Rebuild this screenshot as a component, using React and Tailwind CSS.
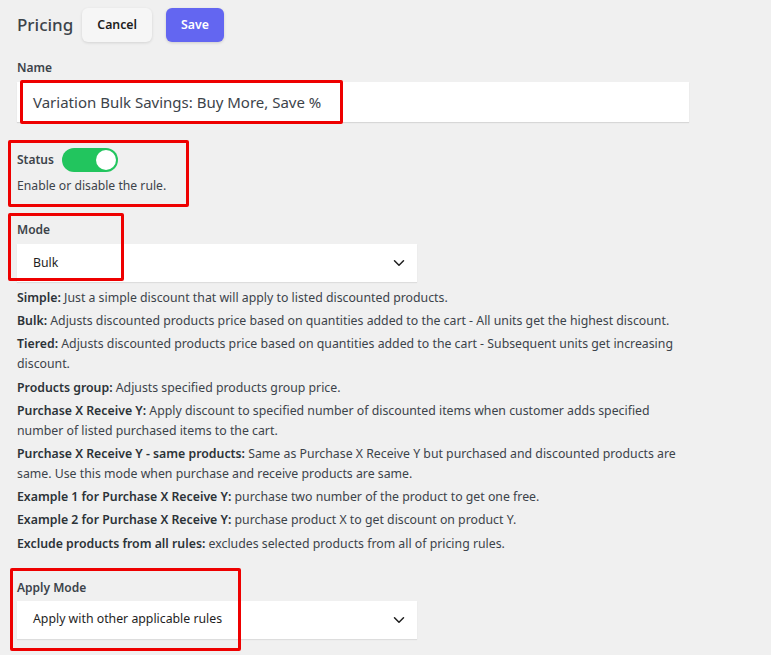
import React from 'react';
import { ChevronDown } from 'lucide-react';

const modes = [
    ['Simple:', 'Just a simple discount that will apply to listed discounted products.'],
    ['Bulk:', 'Adjusts discounted products price based on quantities added to the cart - All units get the highest discount.'],
    ['Tiered:', 'Adjusts discounted products price based on quantities added to the cart - Subsequent units get increasing discount.'],
    ['Products group:', 'Adjusts specified products group price.'],
    ['Purchase X Receive Y:', 'Apply discount to specified number of discounted items when customer adds specified number of listed purchased items to the cart.'],
    ['Purchase X Receive Y - same products:', 'Same as Purchase X Receive Y but purchased and discounted products are same. Use this mode when purchase and receive products are same.'],
    ['Example 1 for Purchase X Receive Y:', 'purchase two number of the product to get one free.'],
    ['Example 2 for Purchase X Receive Y:', 'purchase product X to get discount on product Y.'],
    ['Exclude products from all rules:', 'excludes selected products from all of pricing rules.'],
];

function Mark({ className }) {
    return <div className={"absolute border-[3px] border-[#ee0000] rounded-[2px] pointer-events-none " + className} />;
}

function Select({ value }) {
    return (
        <div className="w-[400px] h-[38px] bg-white shadow-[0_1px_1px_rgba(0,0,0,0.08)] flex items-center justify-between pl-4 pr-[9px] text-[12.3px] text-[#1e1e1e]">
            <span>{value}</span>
            <ChevronDown size={18} strokeWidth={2} className="text-[#1e1e1e]" />
        </div>
    );
}

export default function App() {
    return (
        <div className="relative min-h-[655px] bg-[#f0f0f0] px-[17px] pt-2 font-['Noto_Sans',sans-serif] text-[#3c434a]">
            <div className="flex items-center h-[34px]">
                <h1 className="text-[17px] font-medium text-[#3c434a] mr-[9px]">Pricing</h1>
                <button className="h-[34px] px-[15px] rounded-md bg-[#f6f6f6] shadow-[0_1px_3px_rgba(0,0,0,0.12)] text-[12.3px] font-semibold text-[#1e1e1e]">Cancel</button>
                <button className="h-[34px] px-[15px] ml-[14px] rounded-md bg-[#6366f1] shadow-[0_1px_3px_rgba(0,0,0,0.15)] text-[12.3px] font-semibold text-white">Save</button>
            </div>

            <div className="mt-[17px] text-[12px] font-semibold text-[#3c434a] leading-[18px]">Name</div>
            <div className="mt-[5px] w-[672px] h-[40px] bg-white shadow-[0_1px_1px_rgba(0,0,0,0.1)] flex items-center pl-4 text-[15px] text-[#3c434a]">
                Variation Bulk Savings: Buy More, Save %
            </div>

            <div className="mt-[26px] flex items-center gap-[8px]">
                <span className="text-[12px] font-semibold">Status</span>
                <div className="w-[56px] h-[24px] rounded-full bg-[#22c55e] flex items-center justify-end pr-[2px]">
                    <div className="w-[20px] h-[20px] rounded-full bg-white" />
                </div>
            </div>
            <p className="mt-[4px] text-[12.2px] leading-[20px]">Enable or disable the rule.</p>

            <div className="mt-[25px] text-[12px] font-semibold leading-[18px]">Mode</div>
            <div className="mt-[5px]">
                <Select value="Bulk" />
            </div>

            <div className="mt-[6px] w-[676px] text-[12.3px] leading-[20px] text-[#3c434a]">
                {modes.map(([title, text]) => (
                    <p key={title} className="mb-[3.2px]">
                        <b className="font-semibold text-[#2c3338]">{title}</b> {text}
                    </p>
                ))}
            </div>

            <div className="mt-[25px] text-[12px] font-semibold leading-[18px]">Apply Mode</div>
            <div className="mt-[4px]">
                <Select value="Apply with other applicable rules" />
            </div>

            <Mark className="left-[20px] top-[80px] w-[323px] h-[44px]" />
            <Mark className="left-[8px] top-[140px] w-[181px] h-[67px]" />
            <Mark className="left-[8px] top-[213px] w-[116px] h-[68px]" />
            <Mark className="left-[10px] top-[568px] w-[231px] h-[83px]" />
        </div>
    );
}
